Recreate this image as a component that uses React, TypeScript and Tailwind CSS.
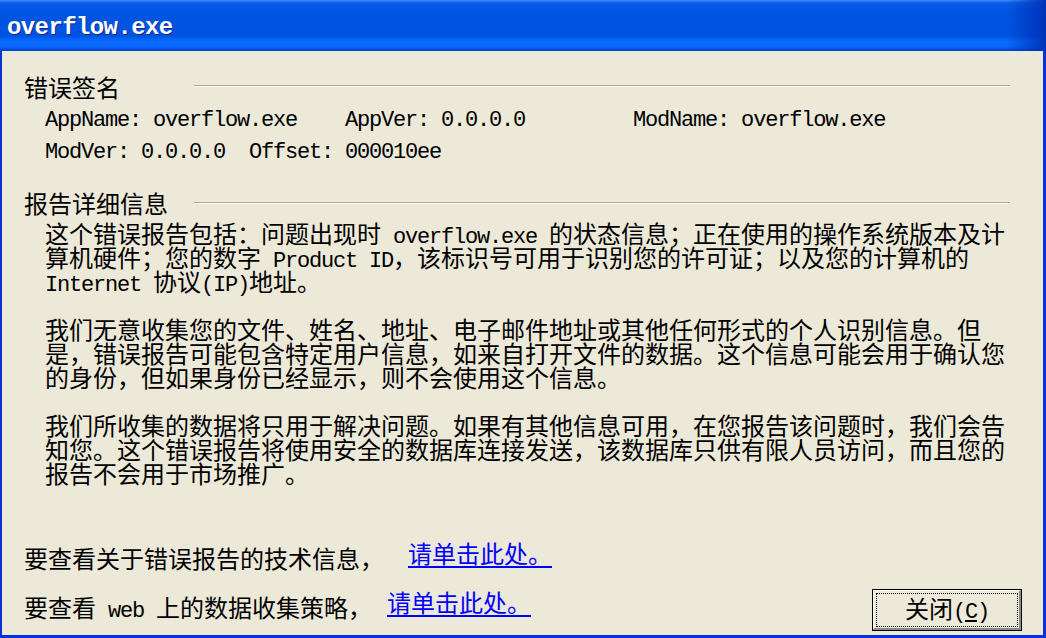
const cjk = "font-['Noto_Sans_CJK_SC',sans-serif] text-[24px] leading-[24px]";
const mono = "font-['Liberation_Mono','Noto_Sans_CJK_SC',monospace] text-[22px] tracking-[-1.2px]";

// latin runs are half width, like the original bitmap font
function M({ children }: { children: string }) {
  return <span className={`${mono} whitespace-pre`}>{children}</span>;
}

function Line({ children }: { children?: React.ReactNode }) {
  return <div className={`${cjk} h-6 whitespace-nowrap text-black`}>{children}</div>;
}

function GroupHeader({ title, lineTop }: { title: string; lineTop: string }) {
  return (
    <div className="flex h-6 items-start">
      <span className={`${cjk} w-[170px] shrink-0 text-black`}>{title}</span>
      <div className={`mr-[33px] h-[2px] flex-1 border-t border-b border-t-[#aca899] border-b-white ${lineTop}`} />
    </div>
  );
}

export default function App() {
  return (
    <div className="flex h-[638px] w-[1046px] flex-col overflow-hidden bg-[#0831d9]">
      {/* title bar */}
      <div className="flex h-[51px] shrink-0 items-center bg-[linear-gradient(180deg,#3d8ef5_0px,#0a5ceb_3px,#0055e3_10px,#0053e1_36px,#0a6bff_41px,#0866fb_47px,#003fcb_51px)]">
        <span className="ml-[7px] mt-[5px] font-['Liberation_Mono',monospace] text-[24px] font-bold leading-none tracking-[-0.6px] text-white [text-shadow:1px_1px_0_#0b2a8f]">
          overflow.exe
        </span>
        <div className="ml-auto h-full w-[40px] bg-[linear-gradient(90deg,transparent,#0033b8)]" />
      </div>

      <div className="mb-[3px] ml-[2px] mr-[3px] flex flex-1 flex-col bg-[#ece9d8] pl-[22px]">
        <div className="mt-[24px]">
          <GroupHeader title="错误签名" lineTop="mt-[10px]" />
        </div>
        <div className="pl-[21px]">
          <div className={`${mono} mt-[9px] h-6 whitespace-pre leading-[26px] text-black`}>
            {"AppName: overflow.exe    AppVer: 0.0.0.0         ModName: overflow.exe"}
          </div>
          <div className={`${mono} mt-[8px] h-6 whitespace-pre leading-[26px] text-black`}>
            {"ModVer: 0.0.0.0  Offset: 000010ee"}
          </div>
        </div>

        <div className="mt-[27px]">
          <GroupHeader title="报告详细信息" lineTop="mt-[11px]" />
        </div>
        <div className="mt-[6px] pl-[21px]">
          <Line>
            这个错误报告包括：问题出现时<M> overflow.exe </M>的状态信息；正在使用的操作系统版本及计
          </Line>
          <Line>
            算机硬件；您的数字<M> Product ID</M>，该标识号可用于识别您的许可证；以及您的计算机的
          </Line>
          <Line>
            <M>Internet </M>协议<M>(IP)</M>地址。
          </Line>
          <Line />
          <Line>我们无意收集您的文件、姓名、地址、电子邮件地址或其他任何形式的个人识别信息。但</Line>
          <Line>是，错误报告可能包含特定用户信息，如来自打开文件的数据。这个信息可能会用于确认您</Line>
          <Line>的身份，但如果身份已经显示，则不会使用这个信息。</Line>
          <Line />
          <Line>我们所收集的数据将只用于解决问题。如果有其他信息可用，在您报告该问题时，我们会告</Line>
          <Line>知您。这个错误报告将使用安全的数据库连接发送，该数据库只供有限人员访问，而且您的</Line>
          <Line>报告不会用于市场推广。</Line>
        </div>

        {/* links */}
        <div className="mt-[61px] flex h-6 items-end">
          <span className={`${cjk} text-black`}>要查看关于错误报告的技术信息，</span>
          <a href="#" className={`${cjk} mb-[5px] ml-[24px] text-[#0000ff] underline underline-offset-[3px]`}>
            请单击此处。
          </a>
        </div>
        <div className="mt-[19px] flex items-start">
          <span className={`${cjk} mt-[6px] text-black`}>
            要查看<M> web </M>上的数据收集策略，
          </span>
          <a href="#" className={`${cjk} ml-[15px] mt-[1px] text-[#0000ff] underline underline-offset-[3px]`}>
            请单击此处。
          </a>
          <button className="ml-auto mr-[21px] h-[42px] w-[150px] border border-black bg-[#ece9d8] p-0">
            <div className="flex h-full w-full border-t border-l border-r-2 border-b-2 border-t-white border-l-white border-r-[#8e8c80] border-b-[#8e8c80] pt-[2px] pl-[2px] pr-[1px] pb-[1px]">
              <div className="flex flex-1 items-center justify-center border border-dotted border-black">
                <span className={`${cjk} text-black`}>
                  关闭<M>(</M>
                  <span className={`${mono} underline underline-offset-[2px]`}>C</span>
                  <M>)</M>
                </span>
              </div>
            </div>
          </button>
        </div>
      </div>
    </div>
  );
}
